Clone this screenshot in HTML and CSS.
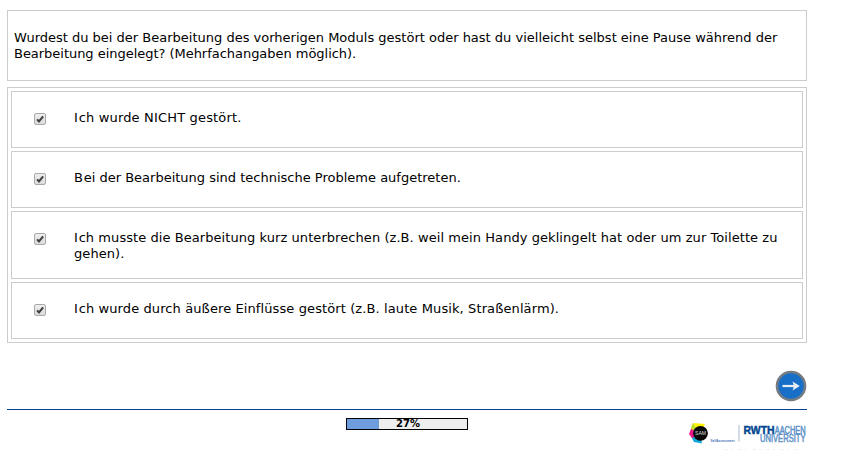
FILE: index.html
```
<!DOCTYPE html>
<html lang="de">
<head>
<meta charset="utf-8">
<title>Befragung</title>
<link rel="stylesheet" href="styles.css">
</head>
<body>
<main class="page">
  <section class="question">
    <p>Wurdest du bei der Bearbeitung des vorherigen Moduls gestört oder hast du vielleicht selbst eine Pause während der<br><span class="tight">Bearbeitung eingelegt? (Mehrfachangaben möglich).</span></p>
  </section>
  <section class="answers">
    <label class="answer"><span class="check"><svg viewBox="0 0 13 13"><path d="M3.3 6.9L5.4 9.1L9.9 3.6"/></svg></span><span class="text spaced-wide">Ich wurde NICHT gestört.</span></label>
    <label class="answer"><span class="check"><svg viewBox="0 0 13 13"><path d="M3.3 6.9L5.4 9.1L9.9 3.6"/></svg></span><span class="text">Bei der Bearbeitung sind technische Probleme aufgetreten.</span></label>
    <label class="answer"><span class="check"><svg viewBox="0 0 13 13"><path d="M3.3 6.9L5.4 9.1L9.9 3.6"/></svg></span><span class="text spaced">Ich musste die Bearbeitung kurz unterbrechen (z.B. weil mein Handy geklingelt hat oder um zur Toilette zu<br>gehen).</span></label>
    <label class="answer"><span class="check"><svg viewBox="0 0 13 13"><path d="M3.3 6.9L5.4 9.1L9.9 3.6"/></svg></span><span class="text spaced-mid">Ich wurde durch äußere Einflüsse gestört (z.B. laute Musik, Straßenlärm).</span></label>
  </section>
  <nav class="actions">
    <button class="next" aria-label="Weiter">
      <svg viewBox="0 0 32 32"><circle cx="16" cy="16" r="14" fill="#176fc8" stroke="#737b83" stroke-width="2.6"/><path d="M7.5 16H19" stroke="#e8eef5" stroke-width="2.2"/><path d="M17.5 11.5L24.8 16L17.5 20.5L19 16Z" fill="#e8eef5"/></svg>
    </button>
  </nav>
  <footer class="footer">
    <div class="progress"><div class="fill" style="width:27%"></div><span>27%</span></div>
    <svg class="logos" viewBox="0 0 120 30">
      <path d="M6 2L18 3L13 13Z" fill="#fff200"/>
      <path d="M6 2L13 13L4 13Q3 7 6 2Z" fill="#c5dc20"/>
      <path d="M4 8L13 12L7 20L2 13Z" fill="#ed1688"/>
      <path d="M5 17L13 13L15 22.5L7 21Z" fill="#12a9dc"/>
      <circle cx="13.5" cy="12.3" r="7.4" fill="#080808"/>
      <text class="sam" x="8" y="14.3" textLength="11" lengthAdjust="spacingAndGlyphs">SAM</text>
      <text class="self" x="23.5" y="20.7" textLength="24" lengthAdjust="spacingAndGlyphs">SelfAssessment</text>
      <path d="M52 4V20.5" stroke="#a9b9d0"/>
      <text class="rwth" x="56.5" y="12.5" textLength="31" lengthAdjust="spacingAndGlyphs">RWTH</text>
      <text class="uni" x="87.7" y="12.5" textLength="31" lengthAdjust="spacingAndGlyphs">AACHEN</text>
      <text class="uni" x="73" y="20.5" textLength="45.5" lengthAdjust="spacingAndGlyphs">UNIVERSITY</text>
      <path d="M37 28.5H110" stroke="#edf2f9" stroke-dasharray="4 3 2 5"/>
    </svg>
  </footer>
</main>
</body>
</html>
```
FILE: styles.css
```
body {
  margin: 0;
  background: #fff;
  color: #000;
  font: 13px/16px Verdana, "DejaVu Sans", sans-serif;
}
.page {
  width: 800px;
  margin-left: 7px;
  padding-top: 10px;
}
.question {
  box-sizing: border-box;
  height: 71px;
  padding: 19px 6px;
  border: 1px solid #ccc;
}
.question p {
  margin: 0;
  white-space: nowrap;
}
.tight {
  letter-spacing: -0.03px;
}
.answers {
  display: grid;
  gap: 3px;
  margin-top: 6px;
  padding: 3px;
  border: 1px solid #ccc;
}
.answer {
  display: flex;
  box-sizing: border-box;
  min-height: 57px;
  padding: 18px 0 16px 22px;
  border: 1px solid #ccc;
}
.check {
  box-sizing: border-box;
  width: 12px;
  height: 12px;
  margin: 3px 28px 0 0;
  border: 1px solid #aaa;
  border-radius: 2px;
  background: linear-gradient(#eee, #dcdcdc);
}
.check svg {
  display: block;
  width: 12px;
  height: 12px;
  margin: -1px;
}
.check path {
  fill: none;
  stroke: #404040;
  stroke-width: 2.3;
}
.text {
  white-space: nowrap;
}
.text::first-letter {
  letter-spacing: 0.8px;
}
.spaced {
  letter-spacing: 0.065px;
}
.spaced-mid {
  letter-spacing: 0.105px;
}
.spaced-wide {
  letter-spacing: 0.17px;
}
.actions {
  display: flex;
  justify-content: flex-end;
  height: 66px;
  box-sizing: border-box;
  padding-top: 27px;
}
.next {
  width: 32px;
  height: 32px;
  padding: 0;
  border: 0;
  background: none;
}
.next svg {
  display: block;
}
.footer {
  display: flex;
  justify-content: space-between;
  padding-left: 339px;
  border-top: 1px solid #054294;
}
.progress {
  position: relative;
  box-sizing: border-box;
  width: 122px;
  height: 12px;
  margin-top: 8px;
  border: 1px solid #000;
  background: #eee;
  font-size: 10px;
  font-weight: bold;
  line-height: 10px;
  text-align: center;
}
.fill {
  height: 10px;
  background: #6f9ddb;
}
.progress span {
  position: absolute;
  inset: 0;
  padding-left: 2px;
}
.logos {
  width: 120px;
  height: 30px;
  margin-top: 11px;
  overflow: visible;
}
.logos text {
  font-family: "Liberation Sans", Arial, sans-serif;
}
.logos .sam {
  fill: #ddd;
  font-size: 5px;
}
.logos .self {
  fill: #3f6fb5;
  font-size: 3.5px;
  font-weight: bold;
}
.logos .rwth {
  fill: #00458f;
  stroke: #00458f;
  stroke-width: 0.4;
  font-size: 10px;
  font-weight: bold;
}
.logos .uni {
  fill: #5f93c8;
  stroke: #5f93c8;
  stroke-width: 0.5;
  font-size: 10px;
}
```
